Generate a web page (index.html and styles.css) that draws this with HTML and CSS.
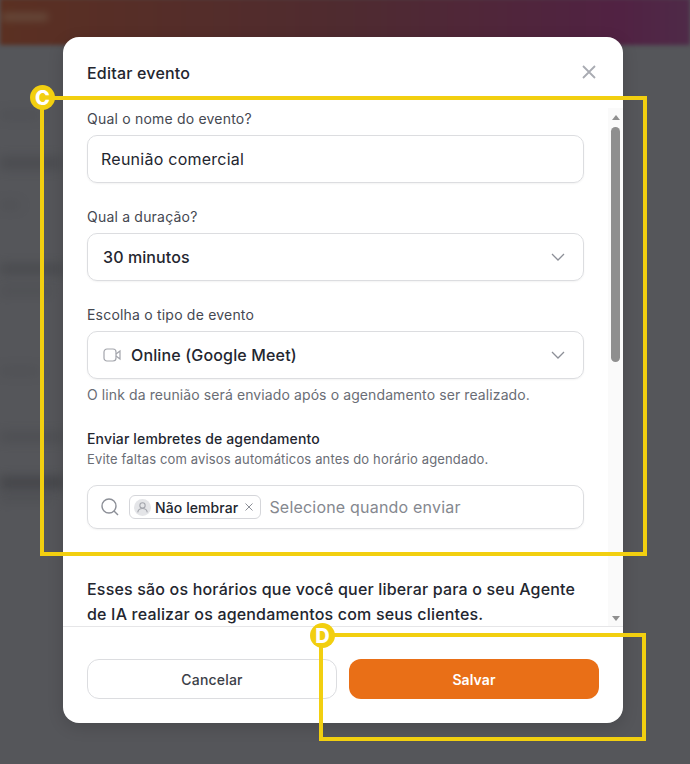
FILE: index.html
```html
<!DOCTYPE html>
<html lang="pt-BR">
<head>
  <meta charset="UTF-8">
  <title>Editar evento</title>
  <link rel="stylesheet" href="styles.css">
</head>
<body>

  <div class="backdrop">
    <div class="topbar"><span class="topbar-logo"></span></div>
    <div class="blur-row blur-a"></div>
    <div class="blur-row blur-b"></div>
    <div class="blur-row blur-c"></div>
    <div class="blur-row blur-d"></div>
    <div class="blur-row blur-e"></div>
    <div class="blur-row blur-f"></div>
    <div class="blur-row blur-g"></div>
    <div class="blur-row blur-h"></div>
    <div class="blur-row blur-i"></div>
  </div>

  <div class="modal">
    <div class="modal-header">
      <h1>Editar evento</h1>
      <svg class="close-icon" width="14" height="14" viewBox="0 0 14 14"><path d="M1 1l12 12M13 1L1 13"/></svg>
    </div>

    <div class="modal-middle">
      <div class="modal-body">
        <label class="field-label">Qual o nome do evento?</label>
        <div class="input input-name">Reunião comercial</div>

        <label class="field-label">Qual a duração?</label>
        <div class="input select">
          <span class="select-value">30 minutos</span>
          <svg class="chevron" width="14" height="8" viewBox="0 0 14 8"><path d="M1 1l6 6 6-6"/></svg>
        </div>

        <label class="field-label">Escolha o tipo de evento</label>
        <div class="input select select-help">
          <svg class="video-icon" width="19" height="14" viewBox="0 0 19 14"><rect x="1" y="1" width="12" height="12" rx="3"/><path d="M13 6l4-3v8l-4-3"/></svg>
          <span class="select-value strong">Online (Google Meet)</span>
          <svg class="chevron" width="14" height="8" viewBox="0 0 14 8"><path d="M1 1l6 6 6-6"/></svg>
        </div>
        <p class="help">O link da reunião será enviado após o agendamento ser realizado.</p>

        <h2>Enviar lembretes de agendamento</h2>
        <p class="help sub">Evite faltas com avisos automáticos antes do horário agendado.</p>

        <div class="input search">
          <svg class="search-icon" width="18" height="18" viewBox="0 0 18 18"><circle cx="8" cy="8" r="7"/><path d="M13 13l4 4"/></svg>
          <span class="tag">
            <svg class="tag-avatar" width="17" height="17" viewBox="0 0 16 16"><circle class="avatar-bg" cx="8" cy="8" r="8"/><circle cx="8" cy="6" r="2.500"/><path d="M3.500 12.500c.5-2.500 2.500-3.500 4.500-3.500s4 1 4.500 3.500"/></svg>
            <span class="tag-text">Não lembrar</span>
            <svg class="tag-x" width="8" height="8" viewBox="0 0 8 8"><path d="M.5.5l7 7M7.500.5l-7 7"/></svg>
          </span>
          <span class="placeholder">Selecione quando enviar</span>
        </div>

        <p class="intro">Esses são os horários que você quer liberar para o seu Agente de IA realizar os agendamentos com seus clientes.</p>
      </div>

      <div class="scrollbar">
        <span class="arrow-up"></span>
        <span class="thumb"></span>
        <span class="arrow-down"></span>
      </div>
    </div>

    <div class="modal-footer">
      <button class="btn btn-cancel">Cancelar</button>
      <button class="btn btn-save">Salvar</button>
    </div>
  </div>

  <div class="callout callout-c"><span class="badge">C</span></div>
  <div class="callout callout-d"><span class="badge">D</span></div>

</body>
</html>
```

FILE: styles.css
```css
* { box-sizing: border-box; }
html, body { margin: 0; height: 100%; }
body { background: #55565a; font-family: Inter, "Noto Sans", sans-serif; color: #23262f; overflow: hidden; position: relative; }

/* blurred page behind the modal */
.backdrop { position: absolute; inset: 0; overflow: hidden; }
.topbar { height: 47px; background: linear-gradient(90deg, #5b3022 0%, #4f2b30 50%, #512243 90%, #4f2a48 100%); filter: blur(2px); padding: 15px 0 0 2px; margin-top: -2px; }
.topbar-logo { display: block; width: 46px; height: 8px; background: #66493a; filter: blur(3px); }
.blur-row { background: #3c3d41; filter: blur(6px); height: 6px; }
.blur-a { width: 40px; margin-top: 67px; opacity: .3; }
.blur-b { width: 62px; margin-top: 40px; height: 10px; opacity: .5; }
.blur-c { width: 20px; margin-top: 34px; opacity: .3; }
.blur-d { width: 64px; margin-top: 58px; opacity: .8; }
.blur-e { width: 50px; margin-top: 16px; opacity: .35; }
.blur-f { width: 40px; margin-top: 74px; opacity: .3; }
.blur-g { width: 64px; margin-top: 60px; opacity: .5; }
.blur-h { width: 64px; margin-top: 38px; height: 9px; opacity: .9; }
.blur-i { width: 50px; margin-top: 8px; opacity: .35; }

.modal { position: absolute; left: 63px; top: 37px; width: 560px; height: 686px; background: #fff; border-radius: 16px; display: flex; flex-direction: column; overflow: hidden; box-shadow: 0 4px 16px rgba(0,0,0,.15); }

.modal-header { height: 71px; flex: none; padding: 0 27px 2px 24px; display: flex; align-items: center; justify-content: space-between; }
.modal-header h1 { margin: 2px 0 0; font-size: 16px; font-weight: 500; letter-spacing: .2px; color: #23262f; }
.close-icon path { stroke: #a9abb2; stroke-width: 1.800; fill: none; }

.modal-middle { flex: 1; min-height: 0; display: flex; }
.modal-body { width: 545px; flex: none; padding: 3px 24px 0; overflow: hidden; }

.field-label { display: block; font-size: 14px; line-height: 16px; letter-spacing: .2px; color: #454851; margin-bottom: 8px; }
.input { height: 48px; border: 1px solid #dcdde0; border-radius: 10px; margin-bottom: 26px; display: flex; align-items: center; padding: 0 13px; box-shadow: 0 1px 2px rgba(0,0,0,.05); font-size: 16px; letter-spacing: .25px; color: #23262f; }
.select { justify-content: flex-start; padding: 0 15px; }
.select-help { margin-bottom: 0; }
.select-value { font-size: 16px; letter-spacing: .1px; font-weight: 500; }
.select-value.strong { margin-left: 9px; letter-spacing: .15px; }
.chevron { margin-left: auto; margin-right: 3px; }
.chevron path { stroke: #8c8f97; stroke-width: 1.300; fill: none; }
.video-icon { flex: none; }
.video-icon rect, .video-icon path { stroke: #a3a5ac; stroke-width: 1.200; fill: none; }

.help { margin: 8px 0 0; font-size: 14px; line-height: 16px; letter-spacing: .1px; color: #6a6d75; }
.help.sub { margin: 4px 0 18px; font-size: 13px; letter-spacing: .15px; }
h2 { margin: 28px 0 0; font-size: 14px; line-height: 16px; font-weight: 500; letter-spacing: .15px; color: #23262f; }

.search { height: 44px; margin-bottom: 0; }
.search-icon { flex: none; margin-right: 10px; }
.search-icon circle, .search-icon path { stroke: #8c8f97; stroke-width: 1.400; fill: none; }
.tag { height: 24px; border: 1px solid #d5d6da; border-radius: 6px; display: inline-flex; align-items: center; padding: 0 7px 0 4px; margin-right: 8px; font-size: 14px; font-weight: 500; letter-spacing: .1px; flex: none; }
.tag-avatar { margin-right: 4px; }
.tag-avatar .avatar-bg { fill: #e4e5e8; stroke: none; }
.tag-avatar circle, .tag-avatar path { stroke: #a3a5ac; fill: none; stroke-width: 1; }
.tag-x { margin-left: 7px; }
.tag-x path { stroke: #8c8f97; stroke-width: 1; fill: none; }
.placeholder { color: #85888f; font-size: 16px; letter-spacing: .2px; white-space: nowrap; }

.intro { margin: 48px 0 0; font-size: 16px; line-height: 25px; letter-spacing: .18px; font-weight: 500; color: #23262f; }

.scrollbar { width: 15px; background: #fafafa; display: flex; flex-direction: column; align-items: center; padding-top: 7px; }
.arrow-up { border: 4px solid transparent; border-top: 0; border-bottom: 5px solid #8f8f8f; margin-bottom: 7px; }
.thumb { width: 9px; height: 235px; border-radius: 5px; background: #8f8f8f; }
.arrow-down { margin-top: auto; margin-bottom: 5px; border: 4px solid transparent; border-bottom: 0; border-top: 5px solid #8f8f8f; }

.modal-footer { height: 97px; flex: none; border-top: 1px solid #e6e6e8; padding: 32px 24px 0; display: flex; gap: 12px; }
.btn { width: 250px; height: 40px; border-radius: 12px; font-family: inherit; font-size: 14px; font-weight: 500; letter-spacing: .2px; }
.btn-cancel { background: #fff; border: 1px solid #dcdde0; color: #3b3e47; }
.btn-save { background: #e96f17; border: none; color: #fff; font-weight: 600; letter-spacing: .1px; }

/* tutorial annotations */
.callout { position: absolute; border: 4px solid #f2cf10; }
.callout-c { left: 40px; top: 96px; width: 607px; height: 460px; }
.callout-d { left: 319px; top: 633px; width: 327px; height: 108px; }
.badge { position: absolute; width: 25px; height: 25px; border-radius: 50%; background: #f2cf10; color: #fff; font-size: 20px; font-weight: 800; display: flex; align-items: center; justify-content: center; }
.callout-c .badge { left: -14px; top: -15px; }
.callout-d .badge { left: -13px; top: -14px; }
```
